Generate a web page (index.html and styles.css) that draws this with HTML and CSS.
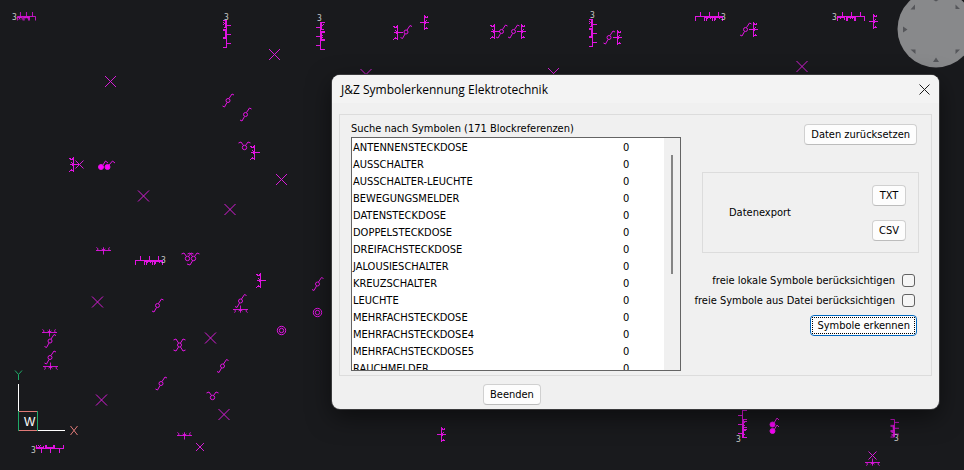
FILE: index.html
```html
<!DOCTYPE html>
<html lang="de">
<head>
    <meta charset="UTF-8">
    <meta name="viewport" content="width=device-width, initial-scale=1.0">
    <title>J&amp;Z Symbolerkennung Elektrotechnik</title>
    <link rel="stylesheet" href="styles.css">
</head>
<body>
    <svg class="drawing" aria-hidden="true">
        <defs>
            <!-- lamp -->
            <path id="cross" d="M-5.5-5.5L5.5 5.5M5.5-5.5L-5.5 5.5"/>
            <path id="cross-s" d="M-4-4L4 4M4-4L-4 4"/>
            <!-- two-way switch -->
            <g id="switch">
                <circle r="2"/>
                <path d="M1-2L4-6.5L6-5.5M-1 2L-3.5 6.5L-5.5 5.5"/>
            </g>
            <!-- series switch -->
            <g id="series">
                <circle cy="0.5" r="2.2"/>
                <path d="M-1-1.5L-3.5-5L-6-4M1-1.5L3.5-5L6-4"/>
            </g>
            <g id="kreuz">
                <circle r="2"/>
                <path d="M-1-2L-3.5-6L-6-5M1-2L3.5-6L6-5M-1 2L-3.5 6L-6 5M1 2L3.5 6L6 5"/>
            </g>
            <!-- socket outlet -->
            <path id="socket" d="M0-7.5V7.5M-4 0H5M-4-6L-2-5L0-6M-4 7L-2 5.5L0 6M-2-2L0 0L-2 2M-1-1V1"/>
            <!-- triple socket outlet -->
            <path id="triple" d="M0 4V0H27V4M4.5 0V-4.5M13.5 0V-4.5M22.5 0V-4.5M9 0V4M10.5 0V4M17 0V4M18.5 0V4M20 0V3M22 0L25 3M25 0L23 3M9 1H18M20 1H27M12 0V2M14.5 0V2"/>
            <g id="ring">
                <circle r="4.2"/>
                <circle r="2.2"/>
            </g>
        </defs>

        <g class="symbols lamps">
            <use href="#cross" x="110.5" y="81.5"/>
            <use href="#cross" x="274.5" y="54.5"/>
            <use href="#cross" x="143.5" y="196"/>
            <use href="#cross" x="281.5" y="179.5"/>
            <use href="#cross" x="230" y="209.5"/>
            <use href="#cross" x="366" y="74.5"/>
            <use href="#cross" x="553.5" y="73.5"/>
            <use href="#cross" x="802" y="66.5"/>
            <use href="#cross" x="97.5" y="302"/>
            <use href="#cross" x="210.5" y="338"/>
            <use href="#cross" x="101.5" y="400"/>
            <use href="#cross" x="224" y="414.5"/>
            <use href="#cross-s" x="79.5" y="164.5"/>
            <use href="#cross-s" x="200" y="447"/>
            <use href="#cross-s" x="872.5" y="455.5"/>
        </g>

        <g class="symbols">
            <use href="#switch" x="228" y="100.5"/>
            <use href="#switch" x="245.5" y="114.5"/>
            <use href="#switch" x="157.5" y="305.5"/>
            <use href="#switch" x="317.5" y="284"/>
            <use href="#switch" x="240.5" y="301"/>
            <use href="#switch" x="161" y="383.5"/>
            <use href="#switch" x="222.5" y="366"/>
            <use href="#switch" x="50" y="341"/>
            <use href="#switch" x="50" y="357.5"/>
            <use href="#switch" x="406" y="32"/>
            <use href="#switch" x="501.5" y="31.5"/>
            <use href="#switch" x="513.5" y="31.5"/>
            <use href="#switch" x="609" y="37.5"/>
            <use href="#switch" x="745.5" y="29.5"/>

            <use href="#series" x="244.5" y="147"/>
            <use href="#series" x="212.5" y="397"/>
            <use href="#series" x="187.5" y="258"/>
            <use href="#series" x="193.5" y="258"/>
            <path d="M187 264L190 265L193 260"/>
            <use href="#kreuz" x="179.5" y="345"/>

            <use href="#ring" x="281.5" y="330.5"/>
            <use href="#ring" x="317.5" y="312.5"/>

            <path d="M103 165L105.5 161L108 163M109 165L112.5 161L115 163"/>
            <path d="M774 423L777 418L779 420M774 430L777 425L779 427"/>
            <g class="filled">
                <circle cx="101" cy="167" r="2.5"/>
                <circle cx="107.5" cy="167" r="2.5"/>
                <circle cx="772.5" cy="424.5" r="2.5"/>
                <circle cx="772.5" cy="431" r="2.5"/>
            </g>
        </g>

        <g class="symbols sockets">
            <use href="#socket" x="254.5" y="152.5"/>
            <use href="#socket" x="73.5" y="164.5"/>
            <use href="#socket" x="397.5" y="32.5"/>
            <use href="#socket" x="494.5" y="31.5"/>
            <use href="#socket" x="260.5" y="280.5"/>
            <use href="#socket" transform="translate(424.5 22.5) scale(-1 1)"/>
            <use href="#socket" transform="translate(521.5 31.5) scale(-1 1)"/>
            <use href="#socket" transform="translate(617.5 37.5) scale(-1 1)"/>
            <use href="#socket" transform="translate(753.5 29.5) scale(-1 1)"/>
            <use href="#socket" transform="translate(873.5 21.5) scale(-1 1)"/>
            <use href="#socket" transform="translate(441.5 434.5) scale(-1 1)"/>
            <use href="#socket" transform="translate(103.5 250.5) rotate(90) scale(.8 1)"/>
            <use href="#socket" transform="translate(184.5 435.5) rotate(90) scale(.8 1)"/>
            <use href="#socket" transform="translate(49.5 332.5) rotate(90) scale(.8 1)"/>
            <use href="#socket" transform="translate(50.5 366.5) rotate(-90) scale(.8 1)"/>
            <use href="#socket" transform="translate(240.5 309.5) rotate(-90) scale(.8 1)"/>
            <use href="#socket" transform="translate(872.5 462.5) rotate(-90) scale(.8 1)"/>

            <use href="#triple" transform="translate(35.5 16.5) scale(-.67 1)"/>
            <use href="#triple" x="695.5" y="16.5"/>
            <use href="#triple" transform="translate(864.5 16.5) scale(-1 1)"/>
            <use href="#triple" x="135.5" y="260.5"/>
            <use href="#triple" transform="translate(63.5 448.5) rotate(180)"/>
            <use href="#triple" transform="translate(226.5 47.5) rotate(-90) scale(1 -1)"/>
            <use href="#triple" transform="translate(320.5 49.5) rotate(-90)"/>
            <use href="#triple" transform="translate(592.5 46.5) rotate(-90) scale(1 -1)"/>
            <use href="#triple" transform="translate(742.5 410.5) rotate(90) scale(1 -1)"/>
            <use href="#triple" transform="translate(894.5 419.5) rotate(90) scale(.65 1)"/>
        </g>

        <g class="counts">
            <text x="12" y="20">3</text>
            <text x="224" y="20">3</text>
            <text x="317" y="21">3</text>
            <text x="590" y="18">3</text>
            <text x="721" y="20">3</text>
            <text x="832" y="20">3</text>
            <text x="161" y="263">3</text>
            <text x="31" y="453">3</text>
            <text x="736" y="442">3</text>
            <text x="894" y="441">3</text>
        </g>

        <!-- coordinate axes -->
        <g class="axes">
            <path class="axis" d="M18.5 384V411M37 430.5H65"/>
            <path class="axis-x" d="M18 411.5H38M18 430.5H38M70.5 426L77.5 435M77.5 426L70.5 435"/>
            <path class="axis-y" d="M18.5 411V431M37.5 411V431M15 370.5L18.5 374.5L22 370.5M18.5 374.5V380"/>
            <text x="24" y="426">W</text>
        </g>

        <!-- view cube -->
        <g class="compass">
            <circle cx="936" cy="29" r="38.5"/>
            <path d="M903 26.5V32.5L907.5 29.5ZM933 62H939L936 57.5ZM910.5 9.5L915 4.5V9.5ZM910.5 49.5H915.5V54ZM955.5 4.5V9H960ZM955.5 49.5H960L955.5 54ZM933.5 0H938.5L936 1.5Z"/>
        </g>
    </svg>

    <main class="dialog" role="dialog" aria-labelledby="dialogTitle">
        <header class="titlebar">
            <h1 id="dialogTitle">J&amp;Z Symbolerkennung Elektrotechnik</h1>
            <button type="button" class="close" aria-label="Schließen">
                <svg width="11" height="11" viewBox="0 0 11 11"><path d="M.5.5L10.5 10.5M10.5.5L.5 10.5"/></svg>
            </button>
        </header>

        <form class="content">
            <div class="panel">
                <section class="search">
                    <h2>Suche nach Symbolen (171 Blockreferenzen)</h2>
                    <div class="list">
                        <div class="list-view">
                            <table>
                                <tbody>
                                    <tr><td>ANTENNENSTECKDOSE</td><td>0</td></tr>
                                    <tr><td>AUSSCHALTER</td><td>0</td></tr>
                                    <tr><td>AUSSCHALTER-LEUCHTE</td><td>0</td></tr>
                                    <tr><td>BEWEGUNGSMELDER</td><td>0</td></tr>
                                    <tr><td>DATENSTECKDOSE</td><td>0</td></tr>
                                    <tr><td>DOPPELSTECKDOSE</td><td>0</td></tr>
                                    <tr><td>DREIFACHSTECKDOSE</td><td>0</td></tr>
                                    <tr><td>JALOUSIESCHALTER</td><td>0</td></tr>
                                    <tr><td>KREUZSCHALTER</td><td>0</td></tr>
                                    <tr><td>LEUCHTE</td><td>0</td></tr>
                                    <tr><td>MEHRFACHSTECKDOSE</td><td>0</td></tr>
                                    <tr><td>MEHRFACHSTECKDOSE4</td><td>0</td></tr>
                                    <tr><td>MEHRFACHSTECKDOSE5</td><td>0</td></tr>
                                    <tr><td>RAUCHMELDER</td><td>0</td></tr>
                                </tbody>
                            </table>
                        </div>
                        <div class="scrollbar"><div class="thumb"></div></div>
                    </div>
                </section>

                <section class="actions">
                    <button type="button" class="btn">Daten zurücksetzen</button>
                    <div class="export">
                        <span>Datenexport</span>
                        <div class="export-buttons">
                            <button type="button" class="btn">TXT</button>
                            <button type="button" class="btn">CSV</button>
                        </div>
                    </div>
                    <div class="options">
                        <label for="local">freie lokale Symbole berücksichtigen <input type="checkbox" id="local"></label>
                        <label for="file">freie Symbole aus Datei berücksichtigen <input type="checkbox" id="file"></label>
                    </div>
                    <button type="submit" class="btn btn-default"><span>Symbole erkennen</span></button>
                </section>
            </div>
            <button type="button" class="btn btn-exit">Beenden</button>
        </form>
    </main>
</body>
</html>
```
FILE: styles.css
```css
* {
    box-sizing: border-box;
}
body {
    font-family: "DejaVu Sans Condensed", "DejaVu Sans", sans-serif;
    font-size: 11px;
    margin: 0;
    min-height: 100vh;
    background-color: #191a1d;
    color: #000;
    overflow: hidden;
}
h1, h2 {
    margin: 0;
    font-weight: normal;
}

/* drawing area */
.drawing {
    position: absolute;
    top: 0;
    left: 0;
    width: 100%;
    height: 100%;
}
.symbols {
    fill: none;
    stroke: #e114e1;
    stroke-width: 1;
}
.lamps {
    stroke: #d61cd6;
}
.sockets {
    shape-rendering: crispEdges;
}
.filled {
    fill: #f0f;
}
.counts {
    fill: #c8c8c8;
    font-family: "DejaVu Sans Mono", monospace;
    font-size: 8px;
}
.axes {
    fill: none;
    stroke-width: 1;
}
.axis {
    stroke: #fff;
}
.axis-x {
    stroke: #e07a78;
}
.axis-y {
    stroke: #1fa968;
}
.axes text {
    fill: #fff;
    font-family: "Liberation Sans", sans-serif;
    font-size: 12px;
}
.compass circle {
    fill: #88898b;
}
.compass path {
    fill: #55565a;
}

/* dialog */
.dialog {
    position: absolute;
    left: 332px;
    top: 75px;
    width: 607px;
    background-color: #f0f0f0;
    border-radius: 8px;
    overflow: hidden;
    box-shadow: 0 0 0 1px #3a3a3c, 0 8px 24px rgba(0,0,0,0.5);
}
.titlebar {
    display: flex;
    justify-content: space-between;
    align-items: center;
    height: 28px;
    padding: 0 9px;
    background-color: #f3f3f3;
}
.titlebar h1 {
    font-family: "Open Sans", sans-serif;
    font-size: 12px;
}
.close {
    display: flex;
    padding: 0;
    border: none;
    background: none;
}
.close path {
    fill: none;
    stroke: #1a1a1a;
}
.content {
    display: flex;
    flex-direction: column;
    padding: 11px 7px 4px;
}
.panel {
    display: flex;
    justify-content: space-between;
    border: 1px solid #dcdcdc;
    padding: 6px 12px 4px 11px;
}
.search {
    width: 330px;
}
.search h2 {
    font-size: 11px;
    line-height: 16px;
}
.list {
    display: flex;
    height: 234px;
    border: 1px solid #646464;
    overflow: hidden;
}
.list-view {
    flex: 1;
    padding-top: 1px;
    background-color: #fff;
}
table {
    width: 100%;
    border-collapse: collapse;
}
td {
    height: 17px;
    padding: 0 0 0 1px;
    line-height: 17px;
}
td:last-child {
    width: 42px;
}
.scrollbar {
    width: 16px;
    padding-top: 17px;
}
.thumb {
    width: 2px;
    height: 119px;
    margin-left: 7px;
    background-color: #858585;
}
.actions {
    display: flex;
    flex-direction: column;
    align-items: flex-end;
    width: 217px;
    padding-top: 3px;
}
.actions > .btn,
.options {
    margin-right: 2px;
}
.btn {
    height: 21px;
    padding: 0 6px;
    border: 1px solid #d0d0d0;
    border-bottom-color: #bcbcbc;
    border-radius: 4px;
    background-color: #fdfdfd;
    color: #000;
    font-family: inherit;
    font-size: 11px;
    line-height: 19px;
}
.export {
    display: flex;
    justify-content: space-between;
    align-items: center;
    width: 100%;
    height: 81px;
    margin-top: 27px;
    padding: 0 12px 0 26px;
    border: 1px solid #dcdcdc;
}
.export-buttons {
    display: flex;
    flex-direction: column;
    gap: 14px;
}
.options {
    display: flex;
    flex-direction: column;
    align-items: flex-end;
    margin-top: 17px;
}
.options label {
    display: flex;
    align-items: center;
    gap: 7px;
    height: 20px;
    white-space: nowrap;
}
.options input {
    appearance: none;
    width: 13px;
    height: 13px;
    margin: 0 2px 0 0;
    border: 1px solid #626262;
    border-radius: 3px;
    background-color: #f5f5f5;
}
.btn-default {
    padding: 1px;
    margin-top: 5px;
    border-color: #0067c0;
}
.btn-default span {
    display: block;
    padding: 0 4px;
    border: 1px dotted #000;
    line-height: 15px;
}
.btn-exit {
    align-self: flex-start;
    margin: 8px 0 0 144px;
}
```
